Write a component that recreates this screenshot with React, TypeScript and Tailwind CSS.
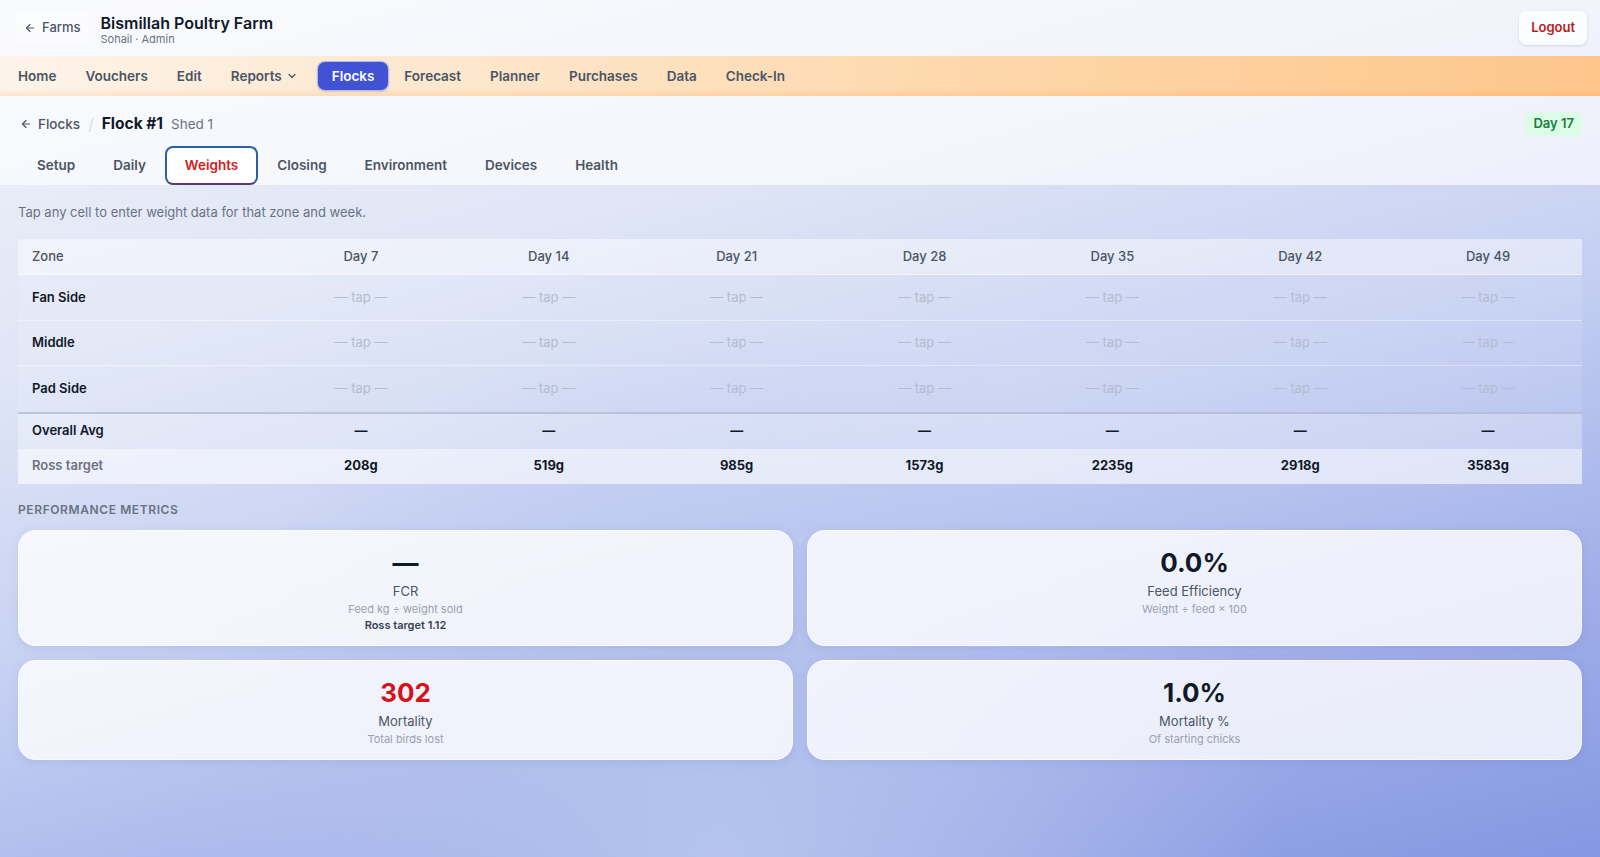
import { ArrowLeft, ChevronDown } from "lucide-react";

const navItems = ["Home", "Vouchers", "Edit", "Reports", "Flocks", "Forecast", "Planner", "Purchases", "Data", "Check-In"];
const tabs = ["Setup", "Daily", "Weights", "Closing", "Environment", "Devices", "Health"];
const days = [7, 14, 21, 28, 35, 42, 49];
const zones = ["Fan Side", "Middle", "Pad Side"];
const rossTargets = ["208g", "519g", "985g", "1573g", "2235g", "2918g", "3583g"];

const rowGrid = "grid grid-cols-[249px_repeat(7,minmax(0,1fr))] items-center";

function MetricCard({
  value,
  label,
  hint,
  target,
  danger,
}: {
  value: string;
  label: string;
  hint: string;
  target?: string;
  danger?: boolean;
}) {
  return (
    <div className="flex flex-col items-center rounded-[18px] border border-white/70 bg-white/80 px-4 pb-3 pt-4 shadow-[0_2px_10px_rgba(60,80,160,0.10)]">
      <div className={`text-[26px] font-bold leading-8 ${danger ? "text-[#d4141c]" : "text-[#111827]"}`}>{value}</div>
      <div className="mt-0.5 text-[13px] leading-5 text-gray-600">{label}</div>
      <div className="text-[11px] leading-4 text-gray-400">{hint}</div>
      {target ? <div className="text-[11px] font-semibold leading-4 text-gray-700">{target}</div> : null}
    </div>
  );
}

export default function App() {
  return (
    <div className="min-h-screen bg-[radial-gradient(ellipse_at_45%_100%,#b5c3ee_0%,rgba(181,195,238,0)_45%),linear-gradient(165deg,#f1f3fa_0%,#dfe5f6_30%,#c3cef2_55%,#9fade8_80%,#8597e2_100%)] font-['Inter',sans-serif] text-gray-900">
      {/* top bar */}
      <header className="flex h-14 items-center justify-between bg-white/60 pl-4 pr-[13px]">
        <div className="flex items-center gap-3">
          <button type="button" className="flex items-center gap-1.5 rounded-lg bg-white/40 px-2 py-1.5 text-[13px] font-medium text-gray-600">
            <ArrowLeft className="h-3 w-3" strokeWidth={2.25} />
            Farms
          </button>
          <div className="flex flex-col pt-1">
            <span className="text-base font-semibold leading-5 text-gray-900">Bismillah Poultry Farm</span>
            <span className="-mt-0.5 text-[11px] leading-4 text-gray-500">Sohail · Admin</span>
          </div>
        </div>
        <button type="button" className="h-[34px] rounded-lg bg-white/80 px-3 text-[13px] font-semibold text-[#b91c1c] shadow-sm">
          Logout
        </button>
      </header>

      {/* main nav */}
      <nav className="flex h-10 items-center gap-px bg-[linear-gradient(90deg,#fdf4ea_0%,#fde4c6_35%,#fed3a2_70%,#fdc68c_100%)] px-1 shadow-[inset_0_-6px_8px_-6px_rgba(240,150,60,0.35)]">
        {navItems.map((item) =>
          item === "Flocks" ? (
            <span key={item} className="ml-1 flex h-[30px] items-center rounded-lg border border-white/60 bg-[#4152d4] px-3.5 text-[13.5px] font-semibold text-white shadow-sm">
              {item}
            </span>
          ) : (
            <span key={item} className="flex items-center px-3.5 text-[13.5px] font-semibold text-gray-600">
              {item}
              {item === "Reports" ? <ChevronDown className="ml-1 h-3 w-3" strokeWidth={2.5} /> : null}
            </span>
          ),
        )}
      </nav>

      {/* flock header + tabs */}
      <section className="bg-white/65 px-[18px] pt-4">
        <div className="flex h-6 items-center justify-between">
          <div className="flex items-center">
            <span className="flex items-center gap-1.5 pl-0.5 text-[13.5px] font-medium text-gray-600">
              <ArrowLeft className="h-3 w-3" strokeWidth={2.25} />
              Flocks
            </span>
            <span className="mx-2 text-base font-light text-gray-300">/</span>
            <span className="text-[15.5px] font-bold text-gray-900">Flock #1</span>
            <span className="ml-2 text-[13.5px] text-gray-500">Shed 1</span>
          </div>
          <span className="flex h-6 items-center rounded-md bg-[#dcfce7] px-2 text-[13px] font-semibold text-[#15803d]">Day 17</span>
        </div>
        <div className="mt-2.5 flex">
          {tabs.map((tab) =>
            tab === "Weights" ? (
              <span key={tab} className="flex h-[39px] items-center rounded-lg border-2 border-[#2c5fa8] border-b-[#5b3b6e] bg-white px-[18px] text-[13.5px] font-semibold text-[#d42020]">
                {tab}
              </span>
            ) : (
              <span key={tab} className="flex h-[39px] items-center px-[19px] text-[13.5px] font-semibold text-gray-600">
                {tab}
              </span>
            ),
          )}
        </div>
      </section>

      <main className="px-[18px] pb-10">
        <p className="pt-[17px] text-[13px] leading-5 text-gray-500">Tap any cell to enter weight data for that zone and week.</p>

        {/* weights grid */}
        <div className="mt-[17px] text-[13px]">
          <div className={`${rowGrid} h-[36px] border-b border-white/50 bg-white/45 font-medium text-gray-600`}>
            <div className="pl-3.5">Zone</div>
            {days.map((d) => (
              <div key={d} className="text-center">Day {d}</div>
            ))}
          </div>
          {zones.map((zone, i) => (
            <div key={zone} className={`${rowGrid} h-[45.5px] bg-white/10 ${i < zones.length - 1 ? "border-b border-white/40" : ""}`}>
              <div className="pl-3.5 font-semibold text-gray-900">{zone}</div>
              {days.map((d) => (
                <div key={d} className="text-center text-[#b4bccf]">— tap —</div>
              ))}
            </div>
          ))}
          <div className={`${rowGrid} h-[37px] border-t-2 border-[#a9b3cc]/70 bg-white/30 font-bold text-gray-900`}>
            <div className="pl-3.5 font-semibold">Overall Avg</div>
            {days.map((d) => (
              <div key={d} className="text-center">—</div>
            ))}
          </div>
          <div className={`${rowGrid} h-[35px] bg-white/60`}>
            <div className="pl-3.5 font-semibold text-gray-500">Ross target</div>
            {rossTargets.map((t) => (
              <div key={t} className="text-center font-bold text-gray-900">{t}</div>
            ))}
          </div>
        </div>

        <h2 className="mt-[18px] text-xs font-semibold uppercase leading-4 tracking-wider text-gray-500">Performance Metrics</h2>

        <div className="mt-3 grid grid-cols-2 gap-3.5">
          <MetricCard value="—" label="FCR" hint="Feed kg ÷ weight sold" target="Ross target 1.12" />
          <MetricCard value="0.0%" label="Feed Efficiency" hint="Weight ÷ feed × 100" />
          <MetricCard value="302" label="Mortality" hint="Total birds lost" danger />
          <MetricCard value="1.0%" label="Mortality %" hint="Of starting chicks" />
        </div>
      </main>
    </div>
  );
}
